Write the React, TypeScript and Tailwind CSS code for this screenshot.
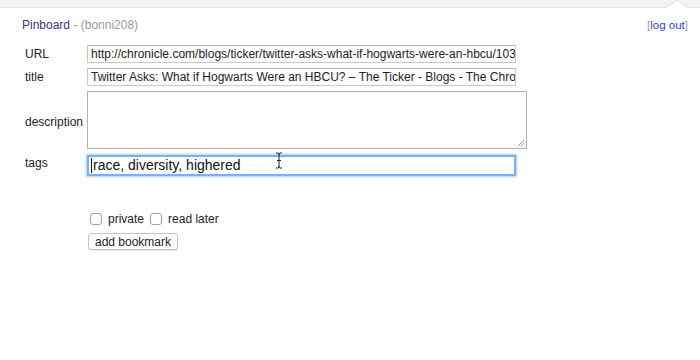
import React from "react";

export default function App() {
  const inputBase =
    "h-[18px] w-[429px] border border-[#c9c9c9] border-t-[#b5b5b5] bg-white pl-[3px] text-[12px] leading-[16px] text-[#222] whitespace-nowrap overflow-hidden";

  return (
    <div className="relative w-[700px] h-[360px] overflow-hidden bg-white font-['Liberation_Sans',Arial,sans-serif] text-[12px] text-[#222]">
      {/* top chrome strip with popover notch */}
      <div className="h-[8px] bg-[#f3f3f3] border-b border-[#e4e4e4]" />
      <svg className="absolute left-[664px] top-0" width="26" height="10" viewBox="0 0 26 10">
        <path d="M0 9 L13 0 L26 9" fill="#ffffff" stroke="#dcdcdc" strokeWidth="1" />
        <rect x="0" y="8" width="26" height="2" fill="#ffffff" />
      </svg>

      <div className="px-[22px] pr-[12px] pt-[10px]">
        {/* header */}
        <div className="flex justify-between leading-[14px]">
          <div>
            <span className="text-[#34347f]">Pinboard</span>
            <span className="text-[#9a9a9a]"> - (bonni208)</span>
          </div>
          <div className="text-[11.5px]">
            <span className="text-[#9a9a9a]">[</span>
            <span className="text-[#3a3af0]">log out</span>
            <span className="text-[#9a9a9a]">]</span>
          </div>
        </div>

        {/* form rows */}
        <div className="mt-[13px] flex flex-col">
          <div className="flex items-center">
            <label className="w-[65px] pl-[3px]">URL</label>
            <div className={inputBase}>
              http://chronicle.com/blogs/ticker/twitter-asks-what-if-hogwarts-were-an-hbcu/103432
            </div>
          </div>
          <div className="mt-[5px] flex items-center">
            <label className="w-[65px] pl-[3px]">title</label>
            <div className={inputBase}>
              Twitter Asks: What if Hogwarts Were an HBCU? – The Ticker - Blogs - The Chronicle of Higher Education
            </div>
          </div>
          <div className="mt-[5px] flex items-center">
            <label className="w-[65px] pl-[3px] pt-[4px]">description</label>
            <div className="relative h-[58px] w-[440px] border border-[#b3b3b3] bg-white">
              <svg className="absolute right-[1px] bottom-[1px]" width="8" height="8" viewBox="0 0 8 8">
                <path d="M7 1 L1 7 M7 4 L4 7" stroke="#9a9a9a" strokeWidth="1" />
              </svg>
            </div>
          </div>
          <div className="mt-[6px] flex items-center">
            <label className="w-[65px] pl-[3px] -mt-[5px]">tags</label>
            <div className="relative flex h-[21px] w-[429px] items-center border-2 border-[#7db0f0] bg-white pl-[2px] text-[14px] text-[#111] shadow-[0_0_2px_1px_#a9ccf7]">
              <span className="mr-[1px] inline-block h-[15px] w-[1px] bg-[#111]" />
              race, diversity, highered
            </div>
          </div>
        </div>

        {/* checkboxes */}
        <div className="mt-[36px] ml-[68px] flex h-[14px] items-center">
          <span className="h-[12px] w-[12px] rounded-[3px] border border-[#a0a0a0] bg-white" />
          <span className="ml-[6px]">private</span>
          <span className="ml-[6px] h-[12px] w-[12px] rounded-[3px] border border-[#a0a0a0] bg-white" />
          <span className="ml-[6px]">read later</span>
        </div>

        <button className="mt-[7px] ml-[66px] flex h-[17px] w-[90px] items-center justify-center rounded-[3px] border border-[#c2c2c2] bg-white text-[12px] leading-[14px] text-[#222] shadow-[0_1px_0_#e8e8e8]">
          add bookmark
        </button>
      </div>

      {/* mouse I-beam cursor */}
      <svg className="absolute left-[275px] top-[152px]" width="8" height="17" viewBox="0 0 8 17">
        <path d="M1 1 H3 Q4 1 4 3 V14 Q4 16 3 16 H1 M7 1 H5 Q4 1 4 3 M4 14 Q4 16 5 16 H7 M2 8.5 H6" fill="none" stroke="#222" strokeWidth="1" />
      </svg>
    </div>
  );
}
